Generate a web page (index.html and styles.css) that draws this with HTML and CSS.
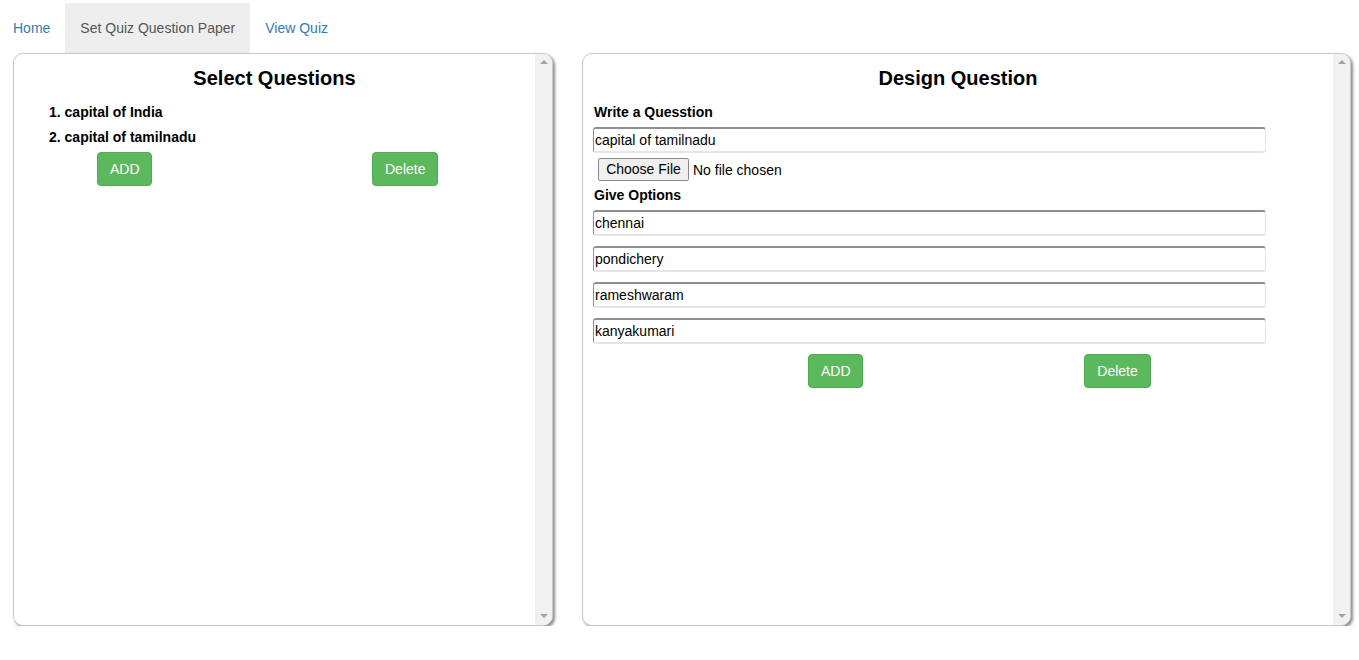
FILE: index.html
```html
<!DOCTYPE html>
<html>
<head>
<meta charset="utf-8">
<title>Quiz</title>
<link rel="stylesheet" href="styles.css">
</head>
<body>
<ul class="tabs">
  <li><a class="tab first" href="#">Home</a></li>
  <li><a class="tab active" href="#">Set Quiz Question Paper</a></li>
  <li><a class="tab" href="#">View Quiz</a></li>
</ul>
<div class="main">
  <div class="panel panel-left">
    <div class="panel-body">
      <h3 class="title">Select Questions</h3>
      <ol class="qlist">
        <li>1. capital of India</li>
        <li>2. capital of tamilnadu</li>
      </ol>
      <div class="btn-row btn-row-left">
        <button class="btn btn-add">ADD</button>
        <button class="btn btn-del">Delete</button>
      </div>
    </div>
    <div class="scrollbar"><span class="arrow up"></span><span class="arrow down"></span></div>
  </div>
  <div class="panel panel-right">
    <div class="panel-body form">
      <h3 class="title">Design Question</h3>
      <label class="lbl lbl-first">Write a Quesstion</label>
      <input class="field" type="text" value="capital of tamilnadu">
      <div class="file-row"><span class="file-btn">Choose File</span><span class="file-txt">No file chosen</span></div>
      <label class="lbl lbl-opts">Give Options</label>
      <input class="field" type="text" value="chennai">
      <input class="field opt" type="text" value="pondichery">
      <input class="field opt" type="text" value="rameshwaram">
      <input class="field opt" type="text" value="kanyakumari">
      <div class="btn-row btn-row-right">
        <button class="btn btn-add">ADD</button>
        <button class="btn btn-del wide">Delete</button>
      </div>
    </div>
    <div class="scrollbar"><span class="arrow up"></span><span class="arrow down"></span></div>
  </div>
</div>
</body>
</html>
```
FILE: styles.css
```css
* { box-sizing: border-box; }
html, body { margin: 0; padding: 0; background: #fff; }
body { font-family: "Liberation Sans", Arial, sans-serif; font-size: 14px; color: #000; }

.tabs { list-style: none; margin: 0; padding: 3px 0 0 0; display: flex; height: 53px; }
.tabs li { display: block; }
.tab { display: block; padding: 15px 15px; line-height: 20px; color: #337ab7; text-decoration: none; font-size: 14px; }
.tab.first { padding-left: 13px; }
.tab.active { background: #eeeeee; color: #555; }

.main { display: flex; padding-left: 13px; gap: 29px; }
.panel {
  display: flex; height: 573px;
  border: 1px solid #c9c9c9; border-radius: 10px; overflow: hidden;
  box-shadow: 2px 2px 3px rgba(0,0,0,0.45);
  background: #fff;
}
.panel-left { width: 540px; }
.panel-right { width: 769px; }
.panel-body { flex: 1; display: flex; flex-direction: column; }

.scrollbar { width: 17px; background: #f1f1f1; display: flex; flex-direction: column; justify-content: space-between; align-items: center; padding: 6px 0 7px; }
.arrow { width: 0; height: 0; border-left: 4px solid transparent; border-right: 4px solid transparent; }
.arrow.up { border-bottom: 4px solid #a3a3a3; }
.arrow.down { border-top: 4px solid #a3a3a3; }

.title { margin: 12px 0 0; font-size: 20px; line-height: 24px; font-weight: bold; text-align: center; }

.qlist { list-style: none; margin: 12px 0 0; padding: 0 0 0 35px; font-weight: bold; }
.qlist li { line-height: 20px; margin-bottom: 5px; }

.btn-row { display: flex; }
.btn {
  font-family: "Liberation Sans", Arial, sans-serif; font-size: 14px; line-height: 20px;
  color: #fff; background: #5cb85c; border: 1px solid #4cae4c; border-radius: 4px;
  padding: 6px 12px; height: 34px;
}
.btn-add { width: 55px; }
.btn-del { width: 66px; }
.btn-del.wide { width: 67px; }
.btn-row-left { padding-left: 83px; gap: 220px; }
.btn-row-right { margin-top: 10px; padding-left: 225px; gap: 221px; }

.lbl { display: block; font-weight: bold; line-height: 20px; margin-left: 11px; }
.lbl-first { margin-top: 12px; }
.lbl-opts { margin-top: 4px; }
.field {
  display: block; width: 673px; height: 26px; margin: 5px 0 0 10px;
  font-family: "Liberation Sans", Arial, sans-serif; font-size: 14px; color: #000;
  padding: 0 1px; border-style: solid; border-color: #8f8f8f #e6e6e6 #e6e6e6 #8f8f8f;
  border-width: 2px 1px 2px 1px;
  border-radius: 3px; background: #fff;
}
.field.opt { margin-top: 10px; }
.file-row { display: flex; align-items: center; margin: 5px 0 0 15px; height: 23px; }
.file-btn {
  display: block; width: 91px; height: 23px; line-height: 21px; text-align: center;
  background: #efefef; border: 1px solid #8a8a8a; border-radius: 2px; color: #000;
}
.file-txt { margin-left: 4px; }
```
